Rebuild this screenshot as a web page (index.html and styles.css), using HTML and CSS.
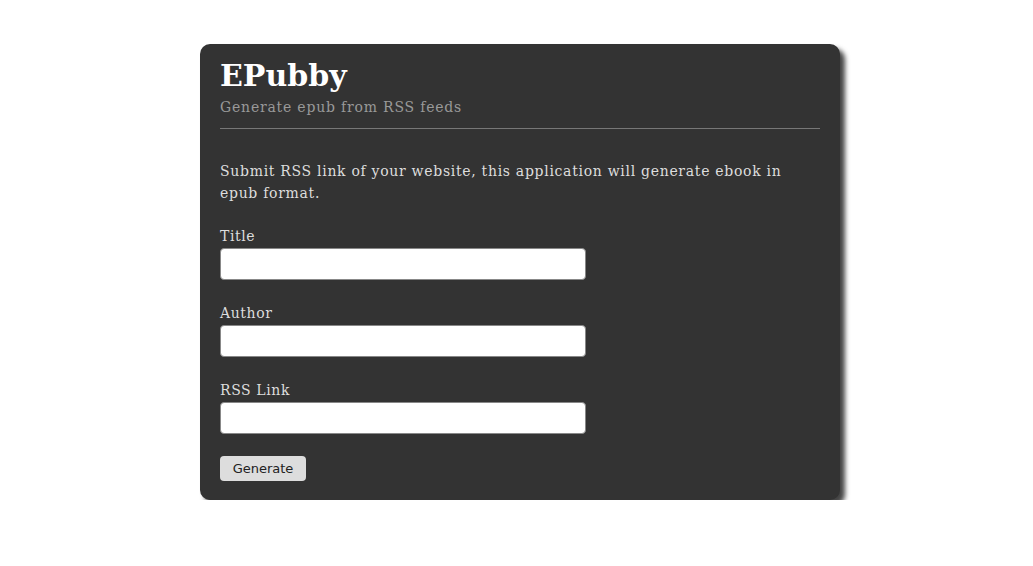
FILE: index.html
```html
<!DOCTYPE html>
<html>
<head>
<meta charset="utf-8">
<title>EPubby</title>
<link rel="stylesheet" href="styles.css">
</head>
<body>
<div class="card">
  <header class="head">
    <h1 class="title">EPubby</h1>
    <p class="subtitle">Generate epub from RSS feeds</p>
  </header>
  <p class="intro">Submit RSS link of your website, this application will generate ebook in epub format.</p>
  <form class="form">
    <div class="field">
      <label class="label">Title</label>
      <input class="input" type="text">
    </div>
    <div class="field">
      <label class="label">Author</label>
      <input class="input" type="text">
    </div>
    <div class="field field-last">
      <label class="label">RSS Link</label>
      <input class="input" type="text">
    </div>
    <button class="btn" type="button">Generate</button>
  </form>
</div>
</body>
</html>
```

FILE: styles.css
```css
html, body { margin: 0; padding: 0; background: #fff; }
body { padding-top: 44px; }
.card {
  width: 600px;
  margin: 0 auto 0 200px;
  background: #333;
  border-radius: 10px;
  box-shadow: 5px 5px 5px #444;
  padding: 14px 20px 19px;
  color: #ddd;
  font-family: "DejaVu Serif", serif;
}
.head { border-bottom: 1px solid #777; padding-bottom: 11px; }
.title {
  margin: 0;
  font-size: 30px;
  line-height: 36px;
  font-weight: bold;
  color: #fff;
}
.subtitle {
  margin: 3px 0 0;
  font-size: 14px;
  line-height: 20px;
  color: #999;
  letter-spacing: 0.8px;
}
.intro {
  margin: 31px 0 23px;
  font-size: 14px;
  line-height: 22px;
  color: #ddd;
  letter-spacing: 0.7px;
  width: 600px;
}
.form { display: flex; flex-direction: column; }
.field { display: flex; flex-direction: column; margin-bottom: 24px; }
.field-last { margin-bottom: 22px; }
.label { font-size: 14px; line-height: 18px; color: #ddd; margin-bottom: 3px; letter-spacing: 0.6px; }
.input {
  width: 366px;
  height: 32px;
  box-sizing: border-box;
  border: 1px solid #888;
  border-radius: 4px;
  background: #fff;
  margin: 0;
}
.btn {
  align-self: flex-start;
  width: 86px;
  height: 25px;
  margin-top: 0;
  border: none;
  border-radius: 4px;
  background: #ddd;
  color: #222;
  font-family: "DejaVu Sans", sans-serif;
  font-size: 13px;
  padding: 0;
}
```
